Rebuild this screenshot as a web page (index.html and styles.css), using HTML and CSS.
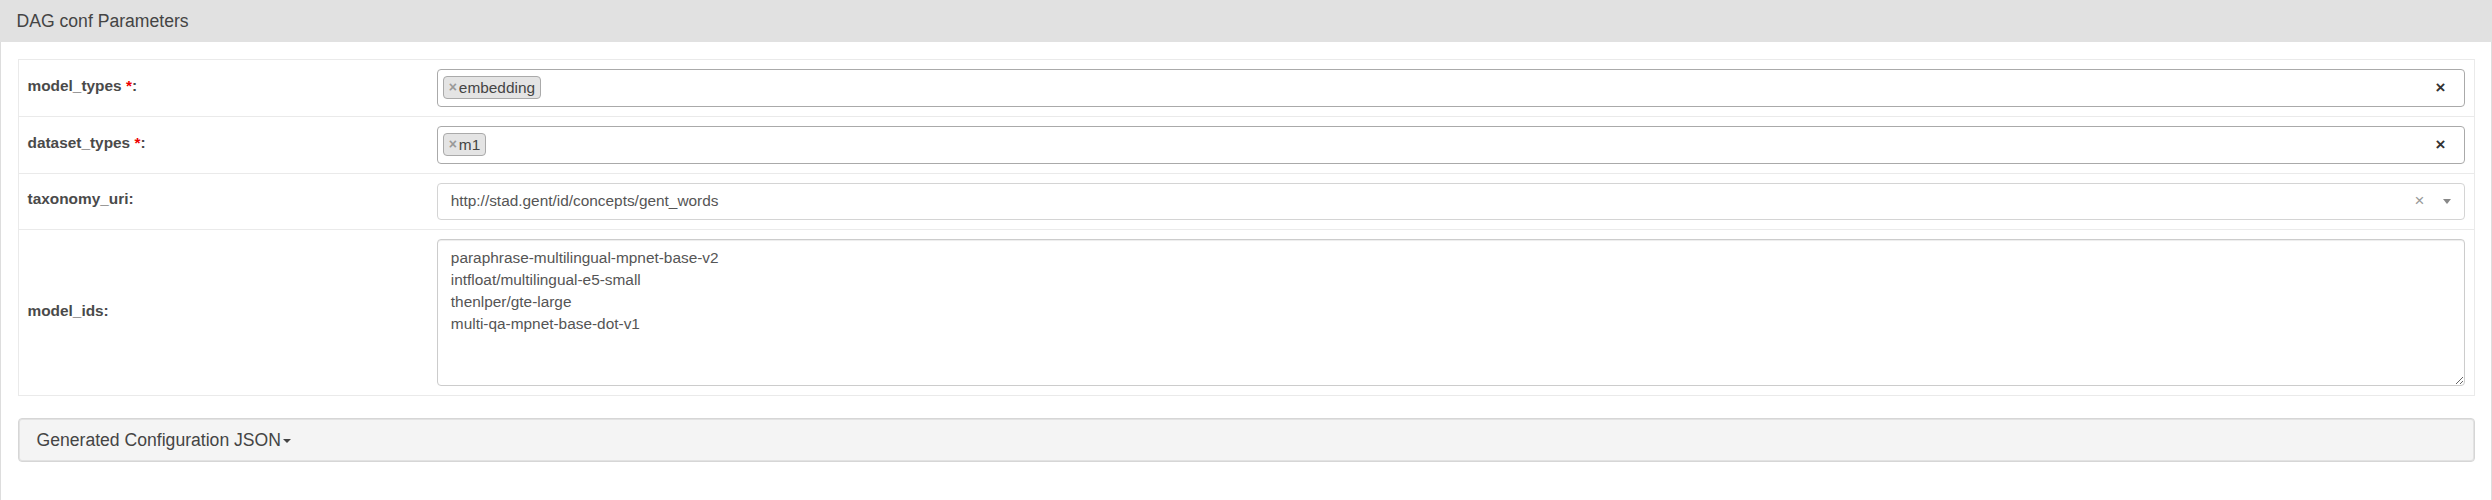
FILE: index.html
```html
<!DOCTYPE html>
<html>
<head>
<meta charset="utf-8">
<link rel="stylesheet" href="styles.css">
</head>
<body>
<div class="panel">
  <div class="panel-heading">DAG conf Parameters</div>
  <div class="panel-body">
    <div class="params">
      <div class="row">
        <div class="label-cell"><span class="label">model_types <span class="req">*</span>:</span></div>
        <div class="field-cell">
          <div class="multi">
            <span class="tag"><span class="tag-x">×</span>embedding</span>
            <span class="multi-clear">×</span>
          </div>
        </div>
      </div>
      <div class="row">
        <div class="label-cell"><span class="label">dataset_types <span class="req">*</span>:</span></div>
        <div class="field-cell">
          <div class="multi">
            <span class="tag"><span class="tag-x">×</span>m1</span>
            <span class="multi-clear">×</span>
          </div>
        </div>
      </div>
      <div class="row">
        <div class="label-cell"><span class="label">taxonomy_uri:</span></div>
        <div class="field-cell">
          <div class="single">
            <span class="single-text">http://stad.gent/id/concepts/gent_words</span>
            <span class="single-clear">×</span>
            <span class="single-arrow"></span>
          </div>
        </div>
      </div>
      <div class="row">
        <div class="label-cell"><span class="label">model_ids:</span></div>
        <div class="field-cell">
          <textarea class="ids" rows="6">paraphrase-multilingual-mpnet-base-v2
intfloat/multilingual-e5-small
thenlper/gte-large
multi-qa-mpnet-base-dot-v1</textarea>
        </div>
      </div>
    </div>
    <div class="json-toggle">Generated Configuration JSON<span class="caret"></span></div>
  </div>
</div>
</body>
</html>
```

FILE: styles.css
```css
* { box-sizing: border-box; }
html, body { margin: 0; padding: 0; background: #fff; }
body {
  font-family: "Liberation Sans", Arial, sans-serif;
  font-size: 15.4px;
  line-height: 22px;
  color: #555;
}
.panel {
  border: 1px solid #ddd;
  border-top: 0;
  min-height: 520px;
}
.panel-heading {
  background: #e1e1e1;
  color: #444;
  font-size: 17.6px;
  line-height: 20px;
  height: 42px;
  padding: 11px 16.5px;
  margin: 0 -1px;
}
.panel-body {
  padding: 16.5px 16.5px;
}
.params {
  border: 1px solid #eaeaea;
}
.row {
  display: grid;
  grid-template-columns: 16.6667% 1fr;
  border-top: 1px solid #eaeaea;
}
.row:first-child { border-top: 0; }
.label-cell {
  padding: 9px;
  display: flex;
  align-items: center;
}
.label {
  font-weight: bold;
  color: #4a4a4a;
  margin-top: -4px;
}
.req { color: #e00; }
.field-cell {
  padding: 9px;
}
.multi {
  display: flex;
  align-items: center;
  height: 38px;
  border: 1px solid #aaa;
  border-radius: 4px;
  padding: 0 5px;
  background: #fff;
}
.tag {
  display: inline-flex;
  align-items: center;
  height: 23px;
  border: 1px solid #aaa;
  border-radius: 4px;
  background: #e4e4e4;
  padding: 0 5px 0 5px;
  color: #444;
  line-height: 21px;
}
.tag-x {
  color: #999;
  font-weight: bold;
  margin-right: 2px;
  font-size: 14px;
}
.multi-clear {
  margin-left: auto;
  margin-right: 13px;
  font-weight: bold;
  font-size: 17px;
  color: #333;
}
.single {
  display: flex;
  align-items: center;
  height: 37.6px;
  border: 1px solid #d4d4d4;
  border-radius: 4px;
  padding: 0 12px 0 13px;
  background: #fff;
}
.single-text { color: #555; flex: 1; }
.single-clear {
  color: #999;
  font-size: 17px;
  margin-right: 18px;
}
.single-arrow {
  width: 0;
  height: 0;
  border-left: 4.5px solid transparent;
  border-right: 4.5px solid transparent;
  border-top: 5px solid #888;
  margin-right: 1px;
}
.ids {
  display: block;
  width: 100%;
  height: 147px;
  border: 1px solid #ccc;
  border-radius: 4px;
  padding: 6.6px 13.2px;
  font-family: "Liberation Sans", Arial, sans-serif;
  font-size: 15.4px;
  line-height: 22px;
  color: #555;
  resize: vertical;
  box-shadow: inset 0 1px 1px rgba(0,0,0,0.075);
}
.json-toggle {
  margin-top: 22px;
  height: 44px;
  display: flex;
  align-items: center;
  padding: 0 18px;
  background: #f4f4f4;
  border: 1px solid #d6d6d6;
  border-radius: 4px;
  box-shadow: inset 0 0 0 1px #e2e2e2;
  font-size: 17.6px;
  color: #444;
}
.caret {
  display: inline-block;
  width: 0;
  height: 0;
  border-left: 4.4px solid transparent;
  border-right: 4.4px solid transparent;
  border-top: 4.4px solid #444;
  margin-left: 2px;
  margin-top: 2px;
}
```
